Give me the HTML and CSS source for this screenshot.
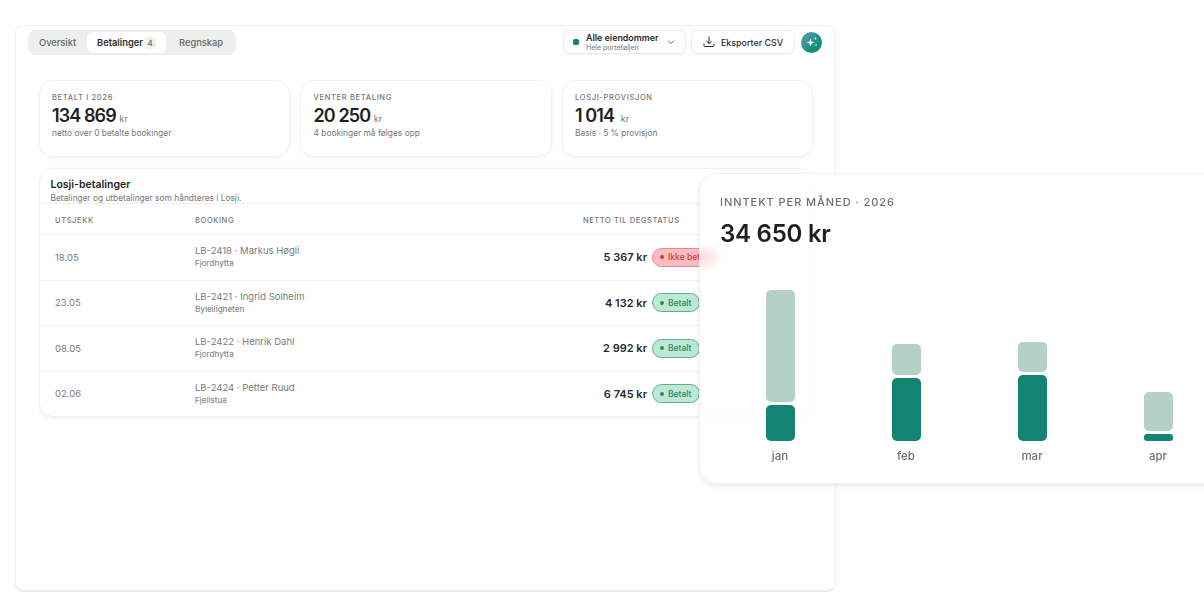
FILE: index.html
```html
<!DOCTYPE html>
<html lang="no">
  <head>
    <meta charset="UTF-8" />
    <title>Losji-betalinger</title>
    <link rel="stylesheet" href="styles.css">
  </head>
  <body>
    <main class="app">
      <header class="toolbar">
        <nav class="tabs">
          <span class="tab">Oversikt</span>
          <span class="tab tab-active">Betalinger <span class="tab-count">4</span></span>
          <span class="tab">Regnskap</span>
        </nav>
        <div class="actions">
          <button class="select">
            <span class="select-dot"></span>
            <span class="select-text">
              <strong>Alle eiendommer</strong>
              <small>Hele porteføljen</small>
            </span>
            <svg class="chevron" width="10" height="10" viewBox="0 0 10 10" fill="none" stroke="#666" stroke-width="1">
              <path d="M2 3.5 5 6.5 8 3.5" />
            </svg>
          </button>
          <button class="export">
            <svg width="12" height="12" viewBox="0 0 12 12" fill="none" stroke="#2a2a2a" stroke-width="1" stroke-linecap="round" stroke-linejoin="round">
              <path d="M6 1v6.5M3.6 5.2 6 7.6l2.4-2.4M1 8v1.6c0 .5.4.9.9.9h8.2c.5 0 .9-.4.9-.9V8" />
            </svg>
            Eksporter CSV
          </button>
          <span class="assistant">
            <svg width="12" height="12" viewBox="0 0 12 12" fill="#fff">
              <path d="M4.500 2.500 5.600 5.400 8.500 6.500 5.600 7.600 4.500 10.500 3.400 7.600 0.500 6.500 3.400 5.400Z" />
              <circle cx="9.500" cy="2.500" r="1" />
              <circle cx="10" cy="9" r="0.800" />
            </svg>
          </span>
        </div>
      </header>

      <section class="kpis">
        <article class="kpi">
          <h2>Betalt i 2026</h2>
          <p class="kpi-value">134 869 <span>kr</span></p>
          <p class="kpi-note">netto over 0 betalte bookinger</p>
        </article>
        <article class="kpi">
          <h2>Venter betaling</h2>
          <p class="kpi-value">20 250 <span>kr</span></p>
          <p class="kpi-note">4 bookinger må følges opp</p>
        </article>
        <article class="kpi">
          <h2>Losji-provisjon</h2>
          <p class="kpi-value">1 014 <span class="kr-wide">kr</span></p>
          <p class="kpi-note">Basis · 5 % provisjon</p>
        </article>
      </section>

      <section class="payments">
        <div class="payments-head">
          <h1>Losji-betalinger</h1>
          <p>Betalinger og utbetalinger som håndteres i Losji.</p>
        </div>
        <div class="row row-head">
          <span>Utsjekk</span>
          <span>Booking</span>
          <span class="num">Netto til deg</span>
          <span>Status</span>
        </div>
        <div class="row">
          <span class="date">18.05</span>
          <span class="booking">LB-2418 · Markus Høgli<small>Fjordhytta</small></span>
          <span class="num amount">5 367 kr</span>
          <span class="pill pill-red">Ikke betalt</span>
        </div>
        <div class="row">
          <span class="date">23.05</span>
          <span class="booking">LB-2421 · Ingrid Solheim<small>Byleiligheten</small></span>
          <span class="num amount">4 132 kr</span>
          <span class="pill">Betalt</span>
        </div>
        <div class="row">
          <span class="date">08.05</span>
          <span class="booking">LB-2422 · Henrik Dahl<small>Fjordhytta</small></span>
          <span class="num amount">2 992 kr</span>
          <span class="pill">Betalt</span>
        </div>
        <div class="row">
          <span class="date">02.06</span>
          <span class="booking">LB-2424 · Petter Ruud<small>Fjellstua</small></span>
          <span class="num amount">6 745 kr</span>
          <span class="pill">Betalt</span>
        </div>
      </section>
    </main>

    <aside class="income">
      <h2>Inntekt per måned · 2026</h2>
      <p class="income-total">34 650 kr</p>
      <div class="chart">
        <div class="month">
          <div class="bar-light" style="height: 112px"></div>
          <div class="bar-dark" style="height: 36px"></div>
          <span>jan</span>
        </div>
        <div class="month">
          <div class="bar-light" style="height: 31px"></div>
          <div class="bar-dark" style="height: 63px"></div>
          <span>feb</span>
        </div>
        <div class="month">
          <div class="bar-light" style="height: 30px"></div>
          <div class="bar-dark" style="height: 66px"></div>
          <span>mar</span>
        </div>
        <div class="month">
          <div class="bar-light" style="height: 39px"></div>
          <div class="bar-dark bar-thin" style="height: 7px"></div>
          <span>apr</span>
        </div>
      </div>
    </aside>
  </body>
</html>
```

FILE: styles.css
```css
* {
  box-sizing: border-box;
}

body {
  font-family: "Inter", "Liberation Sans", sans-serif;
  background-color: #ffffff;
  color: #1f1f1f;
  margin: 0;
  height: 616px;
  overflow: hidden;
  position: relative;
}

h1,
h2,
p {
  margin: 0;
}

.app {
  width: 821px;
  height: 567px;
  margin: 25px 0 0 15px;
  border: 1px solid #f1f1ee;
  border-bottom: 2px solid #ececea;
  border-radius: 8px;
}

.toolbar {
  display: flex;
  justify-content: space-between;
  height: 30px;
  padding: 4px 13px 0 12px;
}

.tabs {
  display: flex;
  align-items: center;
  width: 208px;
  height: 25px;
  padding: 0 2px;
  background-color: #eeeeec;
  border-radius: 8px;
}

.tab {
  padding: 0 11px 0 9px;
  font-size: 9.300px;
  font-weight: 500;
  color: #666666;
  white-space: nowrap;
}

.tab:last-child {
  padding-left: 13px;
}

.tab-active {
  display: flex;
  align-items: center;
  justify-content: space-between;
  width: 83px;
  height: 21px;
  padding: 0 10px;
  background-color: #ffffff;
  border-radius: 6px;
  color: #2a2a2a;
  font-weight: 600;
}

.tab-count {
  width: 12px;
  height: 12px;
  line-height: 12px;
  text-align: center;
  font-size: 8px;
  font-weight: 500;
  color: #666666;
  background-color: #f0f0ee;
  border-radius: 4px;
}

.actions {
  display: flex;
  align-items: center;
  height: 24px;
}

button {
  font-family: inherit;
  background-color: #ffffff;
  border: 1px solid #ecebe7;
  border-radius: 6px;
  height: 24px;
  display: flex;
  align-items: center;
  padding: 0;
  box-shadow: 0 1px 1px rgba(0, 0, 0, 0.03);
}

.select {
  width: 123px;
  padding-left: 9px;
  margin-right: 5px;
}

.select-dot {
  width: 6px;
  height: 6px;
  border-radius: 2px;
  background-color: #11836f;
  margin-right: 7px;
}

.select-text {
  display: flex;
  flex-direction: column;
  text-align: left;
  width: 76px;
}

.select-text strong {
  font-size: 8.900px;
  font-weight: 600;
  line-height: 10px;
  white-space: nowrap;
  color: #2a2a2a;
}

.select-text small {
  font-size: 7px;
  line-height: 9px;
  color: #777777;
}

.chevron {
  margin-left: 4px;
}

.export {
  width: 104px;
  padding-left: 11px;
  gap: 6px;
  font-size: 8.900px;
  font-weight: 500;
  color: #2a2a2a;
  margin-right: 6px;
}

.assistant {
  display: flex;
  align-items: center;
  justify-content: center;
  width: 21px;
  height: 21px;
  border-radius: 50%;
  background: linear-gradient(135deg, #5a9fb0, #11907a 70%);
}

.kpis {
  display: grid;
  grid-template-columns: 251.500px 251.500px 251.500px;
  gap: 10px;
  margin: 24px 0 0 22.500px;
}

.kpi {
  height: 77px;
  padding: 12px 12.500px;
  border: 1px solid #f1f1ef;
  border-radius: 14px;
  box-shadow: 0 1px 3px rgba(0, 0, 0, 0.05);
}

.kpi h2 {
  font-size: 7.500px;
  line-height: 10px;
  font-weight: 500;
  letter-spacing: 0.09em;
  text-transform: uppercase;
  color: #777777;
  margin-bottom: 4px;
}

.kpi-value {
  font-size: 18px;
  line-height: 18px;
  font-weight: 600;
  color: #1f1f1f;
  white-space: nowrap;
  letter-spacing: -0.05em;
}

.kpi-value span {
  font-size: 9px;
  font-weight: 400;
  letter-spacing: 0;
  color: #777777;
}

.kpi-value .kr-wide {
  margin-left: 3px;
}

.kpi-note {
  margin-top: -1px;
  font-size: 8.400px;
  line-height: 12px;
  color: #777777;
}

.payments {
  width: 775px;
  height: 249px;
  margin: 11px 0 0 22.500px;
  border: 1px solid #f2f2f0;
  border-radius: 14px;
  box-shadow: 0 1px 3px rgba(0, 0, 0, 0.08);
}

.payments-head {
  height: 35px;
  padding: 9px 11px 0;
  border-bottom: 1px solid #efefed;
}

.payments-head h1 {
  font-size: 10.500px;
  line-height: 14px;
  font-weight: 600;
}

.payments-head p {
  margin-top: 1px;
  font-size: 8.400px;
  line-height: 11px;
  color: #777777;
  white-space: nowrap;
}

.row {
  display: grid;
  grid-template-columns: 140px 382px 70px 1fr;
  align-items: center;
  height: 45.500px;
  padding-left: 15.500px;
  border-top: 1px solid #f3f3f1;
  font-size: 9.500px;
  color: #7a7a7a;
}

.row-head {
  height: 30px;
  padding-top: 3px;
  border-top: 0;
  font-size: 7.500px;
  font-weight: 500;
  letter-spacing: 0.08em;
  text-transform: uppercase;
  color: #777777;
}

.num {
  text-align: right;
  white-space: nowrap;
  direction: rtl;
}

.booking small {
  display: block;
  font-size: 8px;
  line-height: 11px;
  font-weight: 500;
  color: #888888;
  margin-top: 2px;
}

.amount {
  font-size: 11px;
  font-weight: 600;
  color: #2a2a2a;
  direction: ltr;
}

.pill {
  justify-self: start;
  display: flex;
  align-items: center;
  gap: 4px;
  height: 19px;
  margin-left: 5px;
  padding: 0 7px;
  border: 1px solid #5cae8e;
  border-radius: 10px;
  background-color: #bde8d3;
  font-size: 8.500px;
  font-weight: 500;
  color: #2a8664;
  white-space: nowrap;
}

.pill::before {
  content: "";
  width: 4px;
  height: 4px;
  border-radius: 50%;
  background-color: #1f9268;
}

.pill-red {
  border-color: #e58a90;
  background-color: #fdbcc0;
  color: #d83a48;
}

.pill-red::before {
  background-color: #e0303f;
}

.income {
  position: absolute;
  left: 699px;
  top: 173px;
  width: 560px;
  height: 311px;
  padding: 21px 20px 0;
  background-color: rgba(255, 255, 255, 0.72);
  backdrop-filter: blur(3px);
  border: 1px solid #f1f1ef;
  border-radius: 18px;
  box-shadow: 0 2px 5px rgba(0, 0, 0, 0.09);
}

.income h2 {
  font-size: 11px;
  line-height: 14px;
  font-weight: 500;
  letter-spacing: 0.085em;
  text-transform: uppercase;
  color: #6f6f6f;
}

.income-total {
  margin-top: 9px;
  font-size: 24px;
  line-height: 32px;
  font-weight: 600;
  letter-spacing: -0.01em;
  color: #1f1f1f;
}

.chart {
  display: flex;
  position: absolute;
  left: 17px;
  bottom: 19px;
  align-items: flex-end;
}

.month {
  display: flex;
  flex-direction: column;
  align-items: center;
  width: 126px;
  gap: 3px;
}

.month span {
  margin-top: 4px;
  font-size: 11.500px;
  line-height: 16px;
  font-weight: 500;
  color: #6f6f6f;
}

.bar-light,
.bar-dark {
  width: 29px;
  border-radius: 5px;
}

.bar-light {
  background-color: #b5d1c7;
}

.bar-dark {
  background-color: #138472;
}

.bar-thin {
  border-radius: 3px;
}
```
